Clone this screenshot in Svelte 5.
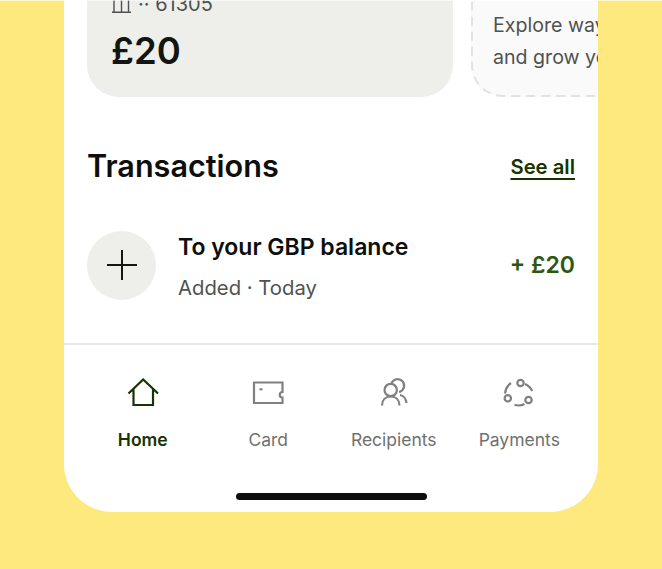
<script>
  const tabs = [
    { label: 'Home', active: true },
    { label: 'Card' },
    { label: 'Recipients' },
    { label: 'Payments' }
  ];
</script>

<div class="page">
  <div class="phone">
    <div class="cards">
      <div class="balance-card">
        <div class="account">
          <svg class="bank" width="20" height="20" viewBox="0 0 20 20" fill="none" stroke="currentColor" stroke-width="1.4">
            <path d="M0 5h19M0 18.300h19M2 5v13M9.500 5v13M16.500 5v13" />
          </svg>
          <span>·· 61305</span>
        </div>
        <div class="amount">£20</div>
      </div>
      <div class="explore-card">
        <svg class="dashes" width="200" height="97" fill="none">
          <rect x="1" y="-40" width="240" height="136" rx="31" stroke="#e2e2e2" stroke-width="2" stroke-dasharray="9 6" />
        </svg>
        <p>Explore ways to save<br />and grow your money</p>
      </div>
    </div>

    <div class="section-header">
      <h2>Transactions</h2>
      <span class="see-all">See all</span>
    </div>

    <div class="transaction">
      <div class="tx-icon">
        <svg width="30" height="30" viewBox="0 0 30 30" fill="none" stroke="#16160f" stroke-width="2">
          <path d="M15 0v30M0 15h30" />
        </svg>
      </div>
      <div class="tx-text">
        <div class="tx-title">To your GBP balance</div>
        <div class="tx-sub">Added · Today</div>
      </div>
      <div class="tx-amount">+ £20</div>
    </div>

    <nav class="tabbar">
      {#each tabs as tab}
        <div class="tab" class:active={tab.active}>
          <svg width="32" height="32" viewBox="0 0 32 32" fill="none" stroke="currentColor" stroke-width="2.200">
            {#if tab.label === 'Home'}
              <path d="M1.500 16.500 16.200 2.500 31 16.500M6.500 12.500V28h19.500V12.500" />
            {:else if tab.label === 'Card'}
              <path d="M2 5.500h28.500v9.500a2.700 2.700 0 0 0 0 5.500V26H2z" />
              <path d="M7.500 12.300h3" />
            {:else if tab.label === 'Recipients'}
              <circle cx="12.700" cy="13" r="6.200" />
              <path d="M13.500 6.500a6.500 6.500 0 1 1 7.500 8.500" />
              <path d="M4 28.500c0-5.500 3.500-9 8.700-9s8.800 3.500 8.800 9M22 18c3.500.5 6 4 6.500 8" />
            {:else}
              <circle cx="17.500" cy="6" r="3.200" />
              <circle cx="4.800" cy="21.300" r="3.200" />
              <circle cx="25.500" cy="23" r="3.200" />
              <path d="M22 7c3 1.500 5.700 3.500 7.200 7M2 16.500c.5-4 2.500-8 6-10.500M11.500 27.800c3 1 7 .8 10-.8" />
            {/if}
          </svg>
          <span>{tab.label}</span>
        </div>
      {/each}
    </nav>

    <div class="home-indicator"></div>
  </div>
</div>

<style>
  :global(body) {
    margin: 0;
    background: #fde97e;
  }

  .page {
    position: relative;
    height: 569px;
    padding: 0 64px;
    box-sizing: border-box;
    overflow: hidden;
    font-family: Inter, sans-serif;
  }

  /* pale hairline along the top edge */
  .page::before {
    content: '';
    position: absolute;
    z-index: 1;
    left: 0;
    right: 0;
    top: 0;
    height: 1px;
    background: rgba(255, 255, 255, 0.6);
  }

  .phone {
    width: 534px;
    height: 512px;
    background: #fff;
    border-radius: 0 0 48px 48px;
    overflow: hidden;
    display: flex;
    flex-direction: column;
  }

  .cards {
    display: flex;
    gap: 18px;
    height: 97px;
    padding-left: 23px;
    flex-shrink: 0;
  }

  .balance-card {
    width: 366px;
    flex-shrink: 0;
    background: #eeefea;
    border-radius: 0 0 32px 32px;
    padding: 0 24px;
    box-sizing: border-box;
    overflow: hidden;
  }

  .account {
    display: flex;
    align-items: center;
    gap: 9px;
    height: 22px;
    margin-top: -7px;
    font-size: 20px;
    color: #50524f;
  }

  .bank {
    flex-shrink: 0;
    margin-left: 1px;
  }

  .account span {
    margin-left: -3px;
  }

  .amount {
    margin-top: 12px;
    font-size: 36.500px;
    line-height: 48px;
    font-weight: 600;
    color: #121511;
  }

  .explore-card {
    position: relative;
    width: 200px;
    flex-shrink: 0;
    background: #fafafa;
    border-radius: 0 0 32px 32px;
    box-sizing: border-box;
    padding: 0 22px;
  }

  .dashes {
    position: absolute;
    left: 0;
    top: 0;
  }

  .explore-card p {
    position: relative;
    margin: 9px 0 0;
    font-size: 19.600px;
    line-height: 32px;
    color: #50524f;
    white-space: nowrap;
  }

  .section-header {
    display: flex;
    justify-content: space-between;
    align-items: center;
    margin-top: 49px;
    padding: 0 23px;
  }

  .section-header h2 {
    margin: 0;
    font-size: 30.600px;
    line-height: 40px;
    font-weight: 600;
    color: #0e0f0c;
  }

  .see-all {
    font-size: 20.300px;
    font-weight: 600;
    color: #163300;
    text-decoration: underline;
    text-underline-offset: 4px;
  }

  .transaction {
    display: flex;
    align-items: center;
    margin-top: 40px;
    padding: 0 23px;
  }

  .tx-icon {
    width: 69px;
    height: 69px;
    border-radius: 50%;
    background: #eeefea;
    display: flex;
    align-items: center;
    justify-content: center;
    flex-shrink: 0;
  }

  .tx-text {
    flex: 1;
    margin-left: 23px;
    padding-top: 5px;
  }

  .tx-title {
    margin-left: -1px;
    font-size: 23px;
    line-height: 32px;
    font-weight: 600;
    color: #0e0f0c;
  }

  .tx-sub {
    margin-top: 9px;
    margin-left: -1px;
    font-size: 20.300px;
    line-height: 32px;
    color: #50524f;
  }

  .tx-amount {
    font-size: 23px;
    font-weight: 600;
    color: #2f5711;
  }

  .tabbar {
    display: flex;
    margin-top: 39px;
    padding: 32px 16px 0;
    border-top: 2px solid #e8e9e6;
  }

  .tab {
    flex: 1;
    display: flex;
    flex-direction: column;
    align-items: center;
    gap: 20px;
    font-size: 17.500px;
    line-height: 22px;
    color: #6f716f;
  }

  .tab svg {
    display: block;
    color: #7f817f;
  }

  .tab.active {
    color: #163300;
    font-weight: 600;
  }

  .tab.active svg {
    color: #163300;
  }

  .home-indicator {
    width: 191px;
    height: 7px;
    margin: 42px auto 0;
    border-radius: 4px;
    background: #0e0f0c;
  }
</style>
